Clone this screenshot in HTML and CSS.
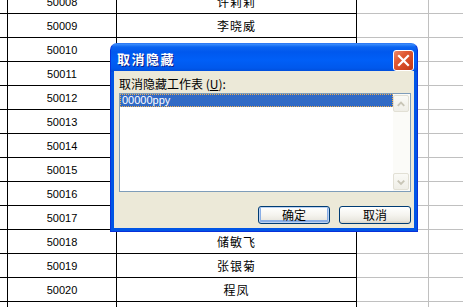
FILE: index.html
```html
<!DOCTYPE html>
<html lang="zh-CN">
<head>
  <meta charset="UTF-8">
  <title>取消隐藏</title>
  <link rel="stylesheet" href="styles.css">
</head>
<body>

<div class="sheet">
  <div class="row"><div class="c a"></div><div class="c id">50008</div><div class="c name">许莉莉</div><div class="c g d"></div><div class="c g e"></div></div>
  <div class="row"><div class="c a"></div><div class="c id">50009</div><div class="c name">李晓威</div><div class="c g d"></div><div class="c g e"></div></div>
  <div class="row"><div class="c a"></div><div class="c id">50010</div><div class="c name"></div><div class="c g d"></div><div class="c g e"></div></div>
  <div class="row"><div class="c a"></div><div class="c id">50011</div><div class="c name"></div><div class="c g d"></div><div class="c g e"></div></div>
  <div class="row"><div class="c a"></div><div class="c id">50012</div><div class="c name"></div><div class="c g d"></div><div class="c g e"></div></div>
  <div class="row"><div class="c a"></div><div class="c id">50013</div><div class="c name"></div><div class="c g d"></div><div class="c g e"></div></div>
  <div class="row"><div class="c a"></div><div class="c id">50014</div><div class="c name"></div><div class="c g d"></div><div class="c g e"></div></div>
  <div class="row"><div class="c a"></div><div class="c id">50015</div><div class="c name"></div><div class="c g d"></div><div class="c g e"></div></div>
  <div class="row"><div class="c a"></div><div class="c id">50016</div><div class="c name"></div><div class="c g d"></div><div class="c g e"></div></div>
  <div class="row"><div class="c a"></div><div class="c id">50017</div><div class="c name"></div><div class="c g d"></div><div class="c g e"></div></div>
  <div class="row"><div class="c a"></div><div class="c id">50018</div><div class="c name">储敏飞</div><div class="c g d"></div><div class="c g e"></div></div>
  <div class="row"><div class="c a"></div><div class="c id">50019</div><div class="c name">张银菊</div><div class="c g d"></div><div class="c g e"></div></div>
  <div class="row"><div class="c a"></div><div class="c id">50020</div><div class="c name">程凤</div><div class="c g d"></div><div class="c g e"></div></div>
  <div class="row"><div class="c a"></div><div class="c id"></div><div class="c name"></div><div class="c g d"></div><div class="c g e"></div></div>
</div>

<div class="dialog">
  <div class="titlebar">
    <span class="title">取消隐藏</span>
    <span class="close">
      <svg width="21" height="21" viewBox="0 0 21 21">
        <path d="M6 6 L15 15 M15 6 L6 15" stroke="#fff" stroke-width="2.2" stroke-linecap="square"/>
      </svg>
    </span>
  </div>
  <div class="body">
    <div class="label">取消隐藏工作表 (<u>U</u>):</div>
    <div class="listbox">
      <div class="items">
        <div class="item selected">00000ppy</div>
      </div>
      <div class="scrollbar">
        <div class="arrow">
          <svg width="15" height="16" viewBox="0 0 15 16"><path d="M4 10 L7.5 6.5 L11 10" fill="none" stroke="#c8c5b6" stroke-width="2"/></svg>
        </div>
        <div class="track"></div>
        <div class="arrow">
          <svg width="15" height="16" viewBox="0 0 15 16"><path d="M4 6.5 L7.5 10 L11 6.5" fill="none" stroke="#c8c5b6" stroke-width="2"/></svg>
        </div>
      </div>
    </div>
    <div class="buttons">
      <button class="btn default">确定</button>
      <button class="btn">取消</button>
    </div>
  </div>
</div>

</body>
</html>
```

FILE: styles.css
```css
body {
  margin: 0;
  overflow: hidden;
  background: #fff;
  font-family: "Liberation Sans", "Noto Sans CJK SC", sans-serif;
}
.sheet {
  margin-top: -10px;
}
.row {
  display: flex;
  height: 24px;
}
.c {
  box-sizing: border-box;
  height: 24px;
  border-right: 1px solid #000;
  border-bottom: 1px solid #000;
  display: flex;
  align-items: center;
  justify-content: center;
  flex-shrink: 0;
  color: #000;
}
.a {
  width: 8px;
}
.id {
  width: 109px;
  font-size: 11px;
}
.name {
  width: 240px;
  font-family: "Noto Sans CJK SC", sans-serif;
  font-size: 12px;
  letter-spacing: 1px;
}
.g {
  border-color: #c0c0c0;
}
.d {
  width: 72px;
}
.e {
  width: 72px;
}

.dialog {
  position: absolute;
  left: 110px;
  top: 43px;
  width: 308px;
  height: 189px;
  box-sizing: border-box;
  display: flex;
  flex-direction: column;
  padding: 0 3px 3px;
  border: 1px solid #0831d9;
  border-top-color: #2f7bf5;
  border-radius: 7px 7px 0 0;
  background: linear-gradient(to bottom, #3d8ffd 0, #0b64f0 3px, #0058ee 8px, #005ff7 16px, #0058ec 24px, #004cd6 28px, #0055e5 28px);
}
.titlebar {
  height: 27px;
  display: flex;
  align-items: center;
  justify-content: space-between;
  padding-left: 3px;
}
.title {
  color: #fff;
  font-family: "Noto Sans CJK SC", sans-serif;
  font-weight: bold;
  font-size: 13px;
  letter-spacing: 1.5px;
  text-shadow: 1px 1px 0 #0a1e8c;
  margin-top: 1px;
}
.close {
  width: 21px;
  height: 21px;
  box-sizing: border-box;
  border: 1px solid #fff;
  border-radius: 3px;
  background: linear-gradient(135deg, #ee8a6a 0, #e05a34 35%, #cf4420 75%, #c0391a 100%);
  display: flex;
  margin-top: 5px;
}
.close svg {
  margin: -1px;
}
.body {
  flex: 1;
  background: #ece9d8;
  padding: 6px 3px 0 5px;
  display: flex;
  flex-direction: column;
}
.label {
  font-family: "Noto Sans CJK SC", sans-serif;
  font-size: 12px;
  line-height: 14px;
  margin-bottom: 2px;
  color: #000;
}
.listbox {
  height: 99px;
  box-sizing: border-box;
  border: 1px solid #7f9db9;
  background: #fff;
  display: flex;
}
.items {
  flex: 1;
}
.item {
  height: 13px;
  box-sizing: border-box;
  font-size: 11px;
  line-height: 12px;
  padding-left: 2px;
}
.selected {
  background: #316ac5;
  color: #fff;
  outline: 1px dotted #f0b050;
  outline-offset: -1px;
}
.scrollbar {
  width: 17px;
  display: flex;
  flex-direction: column;
  background: #fbfbf8;
}
.arrow {
  height: 17px;
  box-sizing: border-box;
  margin: 0 1px 0 0;
  border: 1px solid #e2e0d5;
  border-radius: 2px;
  background: linear-gradient(to bottom, #fafaf6, #efeee7);
  display: flex;
  justify-content: center;
}
.arrow:first-child {
  margin-top: 1px;
}
.arrow:last-child {
  margin-bottom: 1px;
}
.track {
  flex: 1;
}
.buttons {
  display: flex;
  justify-content: flex-end;
  gap: 9px;
  margin-top: 14px;
}
.btn {
  width: 72px;
  height: 18px;
  box-sizing: border-box;
  padding: 0;
  border: 1px solid #003c74;
  border-radius: 3px;
  background: linear-gradient(to bottom, #ffffff 0, #f5f4ef 50%, #e9e7df 85%, #d8d3c6 100%);
  font-family: "Noto Sans CJK SC", sans-serif;
  font-size: 12px;
  line-height: 14px;
  color: #000;
}
.default {
  box-shadow: inset 0 0 0 1px #bcd2f3, inset 0 -1px 0 2px #89aee6;
}
```
